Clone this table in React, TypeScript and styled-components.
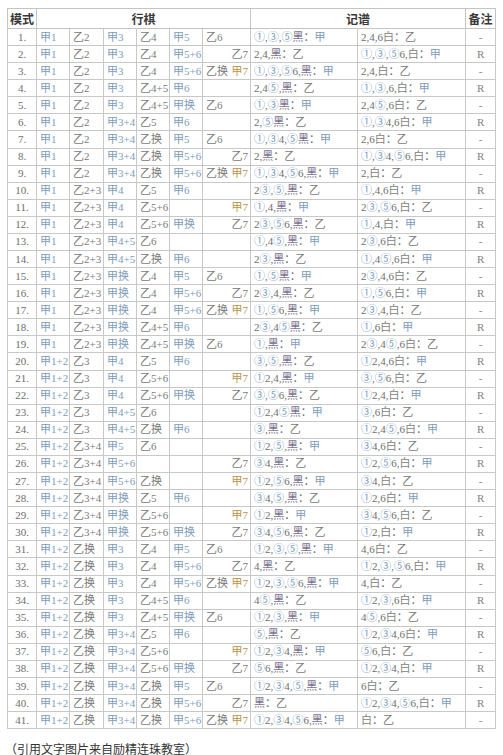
import React from "react";
import styled, { createGlobalStyle } from "styled-components";

const GlobalStyle = createGlobalStyle`
  html, body {
    margin: 0;
    padding: 0;
    background: #fff;
  }
  body {
    font-family: "Liberation Serif", "Noto Sans CJK SC", serif;
  }
`;

const Page = styled.div`
  padding: 8px 0 0 7px;
`;

const Table = styled.table`
  border-collapse: collapse;
  table-layout: fixed;
  width: 488px;
  font-size: 11px;
  color: #777;
`;

const HeadCell = styled.th<{ $split?: boolean }>`
  height: 19px;
  padding: 0;
  border: 1px solid #c4c4c4;
  border-left: ${(p) => (p.$split ? "1px solid #7a7a7a" : "1px solid #c4c4c4")};
  font-size: 12px;
  font-weight: bold;
  color: #3a3a3a;
  text-align: center;
  font-family: "Noto Sans CJK SC", serif;
`;

const Row = styled.tr`
  height: 17.08px;
`;

const Cell = styled.td<{ $align?: "left" | "center"; $split?: boolean }>`
  padding: 0 0 0 ${(p) => (p.$align === "center" ? 0 : 3)}px;
  border: 1px solid #c8c8c8;
  border-left: ${(p) => (p.$split ? "1px solid #7a7a7a" : "1px solid #c8c8c8")};
  text-align: ${(p) => p.$align || "left"};
  white-space: nowrap;
  overflow: hidden;
  line-height: 15px;
`;

const LastCell = styled.td`
  padding: 0 2px 0 3px;
  border: 1px solid #c8c8c8;
  white-space: nowrap;
  line-height: 15px;
`;

const Pair = styled.div`
  display: flex;
  justify-content: space-between;
`;

const tones = {
  jia: "#809cb8",
  yi: "#7a7a7a",
  gold: "#b8954a",
  circle: "#7c9cc0",
  black: "#78728e",
  white: "#828282",
  plain: "#6e6e6e",
};

type Tone = keyof typeof tones;

const Ink = styled.span<{ $tone: Tone }>`
  color: ${(p) => tones[p.$tone]};
`;

const Caption = styled.div`
  margin-top: 11px;
  margin-left: -2px;
  font-family: "Noto Sans CJK SC", sans-serif;
  font-size: 12px;
  color: #333;
  line-height: 17px;
`;

const rows = [
  "甲1 乙2 甲3 乙4 甲5 乙6 _ ①,③,⑤黑：甲 2,4,6白：乙",
  "甲1 乙2 甲3 乙4 甲5+6 _ 乙7 2,4,黑：乙 ①,③,⑤6,白：甲",
  "甲1 乙2 甲3 乙4 甲5+6 乙换 甲7 ①,③,⑤6,黑：甲 2,4,白：乙",
  "甲1 乙2 甲3 乙4+5 甲6 _ _ 2,4⑤,黑：乙 ①,③,6,白：甲",
  "甲1 乙2 甲3 乙4+5 甲换 乙6 _ ①,③黑：甲 2,4⑤,6白：乙",
  "甲1 乙2 甲3+4 乙5 甲6 _ _ 2,⑤黑：乙 ①,③4,6白：甲",
  "甲1 乙2 甲3+4 乙换 甲5 乙6 _ ①,③4,⑤黑：甲 2,6白：乙",
  "甲1 乙2 甲3+4 乙换 甲5+6 _ 乙7 2,黑：乙 ①,③4,⑤6,白：甲",
  "甲1 乙2 甲3+4 乙换 甲5+6 乙换 甲7 ①,③4,⑤6,黑：甲 2,白：乙",
  "甲1 乙2+3 甲4 乙5 甲6 _ _ 2③,⑤,黑：乙 ①,4,6白：甲",
  "甲1 乙2+3 甲4 乙5+6 _ _ 甲7 ①,4,黑：甲 2③,⑤6,白：乙",
  "甲1 乙2+3 甲4 乙5+6 甲换 _ 乙7 2③,⑤6,黑：乙 ①,4,白：甲",
  "甲1 乙2+3 甲4+5 乙6 _ _ _ ①,4⑤,黑：甲 2③,6白：乙",
  "甲1 乙2+3 甲4+5 乙换 甲6 _ _ 2③,黑：乙 ①,4⑤,6白：甲",
  "甲1 乙2+3 甲换 乙4 甲5 乙6 _ ①,⑤黑：甲 2③,4,6白：乙",
  "甲1 乙2+3 甲换 乙4 甲5+6 _ 乙7 2③,4,黑：乙 ①,⑤6,白：甲",
  "甲1 乙2+3 甲换 乙4 甲5+6 乙换 甲7 ①,⑤6,黑：甲 2③,4,白：乙",
  "甲1 乙2+3 甲换 乙4+5 甲6 _ _ 2③,4⑤黑：乙 ①,6白：甲",
  "甲1 乙2+3 甲换 乙4+5 甲换 乙6 _ ①,黑：甲 2③,4⑤,6白：乙",
  "甲1+2 乙3 甲4 乙5 甲6 _ _ ③,⑤,黑：乙 ①2,4,6白：甲",
  "甲1+2 乙3 甲4 乙5+6 _ _ 甲7 ①2,4,黑：甲 ③,⑤6,白：乙",
  "甲1+2 乙3 甲4 乙5+6 甲换 _ 乙7 ③,⑤6,黑：乙 ①2,4,白：甲",
  "甲1+2 乙3 甲4+5 乙6 _ _ _ ①2,4⑤黑：甲 ③,6白：乙",
  "甲1+2 乙3 甲4+5 乙换 甲6 _ _ ③,黑：乙 ①2,4⑤,6白：甲",
  "甲1+2 乙3+4 甲5 乙6 _ _ _ ①2,⑤,黑：甲 ③4,6白：乙",
  "甲1+2 乙3+4 甲5+6 _ _ _ 乙7 ③4,黑：乙 ①2,⑤6,白：甲",
  "甲1+2 乙3+4 甲5+6 乙换 _ _ 甲7 ①2,⑤6,黑：甲 ③4,白：乙",
  "甲1+2 乙3+4 甲换 乙5 甲6 _ _ ③4,⑤,黑：乙 ①2,6白：甲",
  "甲1+2 乙3+4 甲换 乙5+6 _ _ 甲7 ①2,黑：甲 ③4,⑤6,白：乙",
  "甲1+2 乙3+4 甲换 乙5+6 甲换 _ 乙7 ③4,⑤6,黑：乙 ①2,白：甲",
  "甲1+2 乙换 甲3 乙4 甲5 乙6 _ ①2,③,⑤,黑：甲 4,6白：乙",
  "甲1+2 乙换 甲3 乙4 甲5+6 _ 乙7 4,黑：乙 ①2,③,⑤6,白：甲",
  "甲1+2 乙换 甲3 乙4 甲5+6 乙换 甲7 ①2,③,⑤6,黑：甲 4,白：乙",
  "甲1+2 乙换 甲3 乙4+5 甲6 _ _ 4⑤,黑：乙 ①2,③,6白：甲",
  "甲1+2 乙换 甲3 乙4+5 甲换 乙6 _ ①2,③,黑：甲 4⑤,6白：乙",
  "甲1+2 乙换 甲3+4 乙5 甲6 _ _ ⑤,黑：乙 ①2,③4,6白：甲",
  "甲1+2 乙换 甲3+4 乙5+6 _ _ 甲7 ①2,③4,黑：甲 ⑤6,白：乙",
  "甲1+2 乙换 甲3+4 乙5+6 甲换 _ 乙7 ⑤6,黑：乙 ①2,③4,白：甲",
  "甲1+2 乙换 甲3+4 乙换 甲5 乙6 _ ①2,③4,⑤,黑：甲 6白：乙",
  "甲1+2 乙换 甲3+4 乙换 甲5+6 _ 乙7 黑：乙 ①2,③4,⑤6,白：甲",
  "甲1+2 乙换 甲3+4 乙换 甲5+6 乙换 甲7 ①2,③4,⑤6,黑：甲 白：乙",
].map((line) => line.split(" ").map((s) => (s === "_" ? "" : s)));

const widths = [29, 33, 34, 33, 33, 33, 48, 107, 108, 30];

function moveTone(text: string, last?: boolean): Tone {
  if (text.startsWith("甲")) return last ? "gold" : "jia";
  return "yi";
}

// colour every glyph of a record string the way the source image tints it
function Record({ text }: { text: string }) {
  const parts: { t: string; tone: Tone }[] = [];
  for (const ch of Array.from(text)) {
    let tone: Tone = "plain";
    if ("①②③④⑤⑥".includes(ch)) tone = "circle";
    else if (ch === "黑") tone = "black";
    else if (ch === "白") tone = "white";
    else if (ch === "甲") tone = "jia";
    else if (ch === "乙") tone = "yi";
    const prev = parts[parts.length - 1];
    if (prev && prev.tone === tone) prev.t += ch;
    else parts.push({ t: ch, tone });
  }
  return (
    <>
      {parts.map((p, i) => (
        <Ink key={i} $tone={p.tone}>
          {p.t}
        </Ink>
      ))}
    </>
  );
}

export default function App() {
  return (
    <Page>
      <GlobalStyle />
      <Table>
        <colgroup>
          {widths.map((w, i) => (
            <col key={i} style={{ width: w }} />
          ))}
        </colgroup>
        <thead>
          <tr>
            <HeadCell>模式</HeadCell>
            <HeadCell colSpan={6}>行棋</HeadCell>
            <HeadCell colSpan={2} $split>
              记谱
            </HeadCell>
            <HeadCell>备注</HeadCell>
          </tr>
        </thead>
        <tbody>
          {rows.map((r, i) => (
            <Row key={i}>
              <Cell $align="center">
                <Ink $tone="plain">{i + 1}.</Ink>
              </Cell>
              {r.slice(0, 5).map((m, j) => (
                <Cell key={j}>
                  {m && <Ink $tone={moveTone(m)}>{m}</Ink>}
                </Cell>
              ))}
              <LastCell>
                <Pair>
                  <Ink $tone={moveTone(r[5])}>{r[5]}</Ink>
                  <Ink $tone={moveTone(r[6], true)}>{r[6]}</Ink>
                </Pair>
              </LastCell>
              <Cell $split>
                <Record text={r[7]} />
              </Cell>
              <Cell>
                <Record text={r[8]} />
              </Cell>
              <Cell $align="center">
                <Ink $tone="white">{i % 2 === 0 ? "-" : "R"}</Ink>
              </Cell>
            </Row>
          ))}
        </tbody>
      </Table>
      <Caption>（引用文字图片来自励精连珠教室）</Caption>
    </Page>
  );
}
